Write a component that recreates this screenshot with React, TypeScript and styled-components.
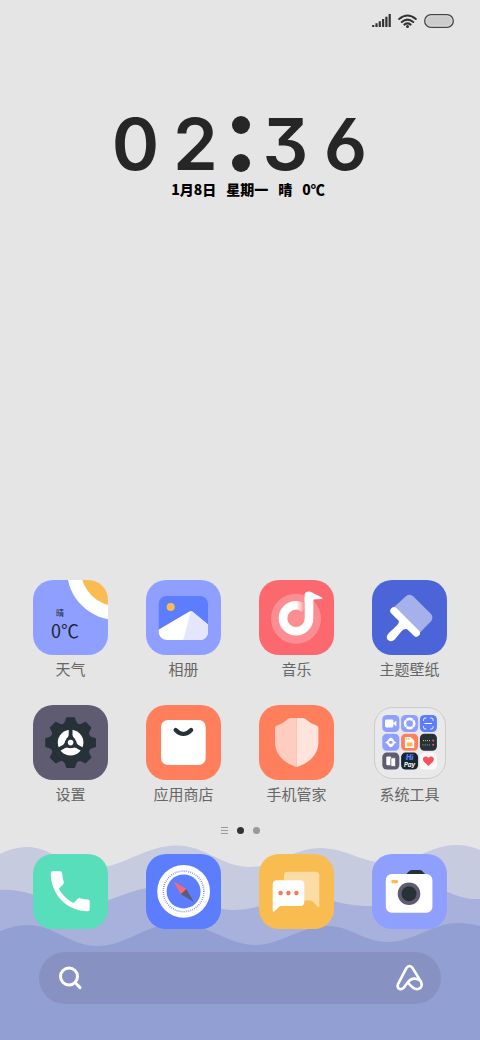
import React from 'react';
import styled, { createGlobalStyle } from 'styled-components';

const INK = '#263238';
const BLUE = '#5d7dff';
const PERIWINKLE = '#8f9fff';
const ORANGE = '#ff7f5c';
const AMBER = '#f8bc50';
const SLATE = '#5f5b70';

const GlobalStyle = createGlobalStyle`
  * { box-sizing: border-box; }
  body {
    margin: 0;
    background: #e5e5e5;
    font-family: 'Noto Sans CJK SC', sans-serif;
  }
  button { font: inherit; color: inherit; border: 0; padding: 0; background: none; cursor: pointer; }
`;

const Screen = styled.div`
  position: relative;
  display: flex;
  flex-direction: column;
  min-height: 100vh;
  padding-bottom: 36px;
  background: #e5e5e5;
`;

const Wallpaper = styled.svg`
  position: absolute;
  left: 0;
  bottom: 0;
  width: 100%;
  height: 200px;
`;

const StatusBar = styled.header`
  display: flex;
  justify-content: flex-end;
  align-items: center;
  gap: 7px;
  height: 41px;
  padding-right: 26px;
`;

const ClockWidget = styled.section`
  display: flex;
  flex-direction: column;
  align-items: center;
  margin-top: 67px;
`;

const Time = styled.time`
  display: flex;
  justify-content: center;
  align-items: center;
  height: 71px;
  padding-left: 1px;
  color: #262626;
  font: 600 72px/70px Inter, sans-serif;
  font-feature-settings: 'cv03', 'cv09';
`;

const Digit = styled.span`
  width: 60px;
  text-align: center;
`;

const Colon = styled.span`
  display: flex;
  flex-direction: column;
  align-items: center;
  gap: 20px;
  width: 30px;
`;

const ColonDot = styled.i`
  width: 18px;
  height: 18px;
  border-radius: 50%;
  background: #262626;
`;

const DateLine = styled.p`
  display: flex;
  gap: 10px;
  margin: 0 0 0 16px;
  color: #000;
  font-size: 14px;
  font-weight: 900;
  line-height: 20px;
`;

const AppGrid = styled.main`
  position: relative;
  display: grid;
  grid-template-columns: repeat(4, 1fr);
  row-gap: 26px;
  margin-top: auto;
  padding: 0 14px;
`;

const Dock = styled.nav`
  position: relative;
  display: grid;
  grid-template-columns: repeat(4, 1fr);
  margin-top: 18px;
  padding: 0 14px;
`;

const AppButton = styled.button`
  display: flex;
  flex-direction: column;
  align-items: center;
  gap: 4px;
`;

const Tile = styled.span<{ $color: string }>`
  position: relative;
  display: block;
  width: 75px;
  height: 75px;
  border-radius: 20px;
  overflow: hidden;
  background: ${(p) => p.$color};
  svg { display: block; }
`;

const Label = styled.span`
  color: #666;
  font-size: 15px;
  font-weight: 400;
  line-height: 20px;
`;

const WeatherReading = styled.span`
  position: absolute;
  left: 18px;
  top: 27px;
  display: flex;
  flex-direction: column;
  color: #1f2533;
  text-align: left;
`;

const Condition = styled.span`
  padding-left: 5px;
  font-size: 8px;
  line-height: 12px;
`;

const Temperature = styled.span`
  font-size: 18px;
  font-weight: 400;
  line-height: 22px;
`;

const Pager = styled.div`
  position: relative;
  display: flex;
  justify-content: center;
  align-items: center;
  gap: 9px;
  height: 12px;
  margin-top: 20px;
`;

const PageDot = styled.i<{ $active?: boolean }>`
  width: 7px;
  height: 7px;
  border-radius: 50%;
  background: ${(p) => (p.$active ? '#333' : '#999')};
`;

const SearchBar = styled.form`
  position: relative;
  display: flex;
  align-items: center;
  height: 52px;
  margin: 23px 39px 0;
  padding: 0 17px 0 19px;
  border-radius: 26px;
  background: #8792c2;
  button { display: flex; }
`;

const SearchInput = styled.input`
  flex: 1;
  min-width: 0;
  height: 40px;
  border: 0;
  outline: 0;
  background: none;
  color: #fff;
  font: 16px 'Noto Sans CJK SC', sans-serif;
`;

const Art = ({ children }: { children?: React.ReactNode }) => (
  <svg width="75" height="75" viewBox="0 0 75 75" aria-hidden="true">{children}</svg>
);

const WeatherIcon = () => (
  <>
    <Art>
      <circle cx="84" cy="-10" r="50" fill="#fff" />
      <circle cx="84" cy="-10" r="36" fill={AMBER} />
    </Art>
    <WeatherReading>
      <Condition>晴</Condition>
      <Temperature>0℃</Temperature>
    </WeatherReading>
  </>
);

const AlbumIcon = () => (
  <Art>
    <clipPath id="photo"><rect x="12.7" y="16" width="49.3" height="44" rx="8" /></clipPath>
    <g clipPath="url(#photo)">
      <rect x="12" y="15" width="51" height="46" fill={BLUE} />
      <path d="M12 50 L43.4 31.6 Q45 30.6 46.5 31.8 L63 45.2 V61 H12Z" fill="#fff" />
      <path d="M45 31 L46.5 31.8 L63 45.2 V61 H37Z" fill="#e3e6fd" />
      <circle cx="24.7" cy="27" r="4" fill={AMBER} />
    </g>
  </Art>
);

const MusicIcon = () => (
  <Art>
    <linearGradient id="tail" x1="37" x2="45" y1="0" y2="0" gradientUnits="userSpaceOnUse">
      <stop offset="0" stopColor="#fff" />
      <stop offset="1" stopColor="#fff" stopOpacity="0.1" />
    </linearGradient>
    <circle cx="37" cy="38.7" r="25" fill="#fff" fillOpacity="0.25" />
    <path d="M50 17 V38.3 A13 13 0 1 1 37 25.3" fill="none" stroke="#fff" strokeWidth="8.6" />
    <path d="M37 25.3 Q41.5 25.3 45.6 28.5" fill="none" stroke="url(#tail)" strokeWidth="8.6" />
    <path d="M45.7 20 V14.6 Q46 11.6 50 11.6 Q51.5 11.6 53 12.6 L63 17.6 Q64.2 18.8 62.5 19 L54.3 19.4 V22 H45.7Z" fill="#fff" />
  </Art>
);

const ThemeIcon = () => (
  <Art>
    <path d="M21.5 27.5 L34 16.2 Q37.7 13.2 41.4 16.4 L59 34 Q61.8 37.7 59 41.3 L47.5 53 Z" fill="#a6b1ec" />
    <path d="M22 30.8 L44.2 53" stroke="#fff" strokeWidth="7.4" strokeLinecap="round" />
    <path d="M25 35 Q28.5 41 26 44.3 L16.2 53.8 C12 59 18 63.5 22.5 59.8 L29.5 51.2 Q33 46.8 41 51.5 Z" fill="#fff" />
  </Art>
);

const SettingsIcon = () => (
  <Art>
    <g transform="translate(37.6 37.6)">
      <g fill={INK} stroke={INK} strokeWidth="2" strokeLinejoin="round">
        {[0, 45, 90, 135, 180, 225, 270, 315].map((angle) => (
          <path key={angle} d="M-7.5 -17.5 Q-5.2 -19 -4.6 -21 L-3.6 -24.4 H3.6 L4.6 -21 Q5.2 -19 7.5 -17.5Z" transform={`rotate(${angle})`} />
        ))}
      </g>
      <circle r="19.2" fill={INK} />
      <circle r="12.8" fill="#fff" />
      {[0, 120, 240].map((angle) => (
        <path key={angle} d="M-1.9 -13.5 H1.9 V-7.5 Q2.2 -5 4.2 -4 L0 1 L-4.2 -4 Q-2.2 -5 -1.9 -7.5Z" fill={INK} transform={`rotate(${angle})`} />
      ))}
      <circle r="5.6" fill={INK} />
      <circle r="2.8" fill="#fff" />
    </g>
  </Art>
);

const StoreIcon = () => (
  <Art>
    <rect x="15" y="15" width="44.7" height="45" rx="7" fill="#fff" />
    <path d="M29.6 25 Q37.4 33 45.2 25" fill="none" stroke={INK} strokeWidth="4.2" strokeLinecap="round" />
  </Art>
);

const GuardIcon = () => (
  <Art>
    <path d="M37.7 13 H32 Q30.3 13 29 14 Q24 18.6 18 20.4 Q16 21 16 23 V37 C16 49 24 57.5 37.7 62Z" fill="#ffcdbf" />
    <path d="M37.7 13 H43.4 Q45.1 13 46.4 14 Q51.4 18.6 57.4 20.4 Q59.4 21 59.4 23 V37 C59.4 49 51.4 57.5 37.7 62Z" fill="#ffe3dc" />
  </Art>
);

const MINI_COLORS = [PERIWINKLE, PERIWINKLE, BLUE, PERIWINKLE, ORANGE, INK, SLATE, '#17252f', '#fafafa'];

const FolderIcon = () => (
  <Art>
    <rect x="2.5" y="2.5" width="71" height="71" rx="18" fill="#e9e9e9" stroke="#cbcbcb" />
    {MINI_COLORS.map((color, i) => (
      <rect key={i} x={10.3 + (i % 3) * 18.8} y={10 + Math.floor(i / 3) * 18.8} width="17" height="17" rx="4.5" fill={color} />
    ))}
    {/* video */}
    <rect x="13" y="14.6" width="8.4" height="7.8" rx="1.4" fill="#fff" />
    <path d="M21 18.5 L24.4 15.4 V21.6Z" fill="#fff" />
    {/* browser */}
    <circle cx="37.6" cy="18.5" r="4.6" fill="none" stroke="#fff" strokeWidth="2.6" />
    <path d="M33 13.900 L34.600 15.500 M42.200 13.900 L40.600 15.500 M33 23.100 L34.600 21.500 M42.200 23.100 L40.600 21.500" stroke={PERIWINKLE} strokeWidth="0.8" />
    {/* scanner */}
    <path d="M51.5 15.8 V14.8 Q51.5 13 53.3 13 H54.3 M58.3 13 H59.3 Q61.1 13 61.1 14.8 V15.8 M61.1 21.2 V22.2 Q61.1 24 59.3 24 H58.3 M54.3 24 H53.3 Q51.5 24 51.5 22.2 V21.2 M52.5 18.5 H60" fill="none" stroke="#fff" strokeWidth="1" />
    {/* cleaner */}
    <path d="M13 37.4 Q15 36.800 16.400 34.400 Q18.800 30.500 21.200 34.400 Q22.600 36.800 24.600 37.400 Q22.600 38 21.200 40.400 Q18.800 44.300 16.400 40.400 Q15 38 13 37.400Z" fill="#fff" />
    <rect x="17" y="36.100" width="3.600" height="2.600" rx="1.200" fill={PERIWINKLE} />
    {/* sim card */}
    <path d="M33.6 32 H38.6 L42.3 35.4 V43 H33.6 Q32.9 43 32.9 42 V33 Q32.9 32 33.6 32Z" fill="#fff" />
    <rect x="34.7" y="37.4" width="5.8" height="4" fill={AMBER} />
    <path d="M34.8 33 V35 M36.8 33 V35" stroke={AMBER} strokeWidth="1" />
    {/* recorder */}
    <path d="M51 35.6 H58" stroke={AMBER} strokeWidth="1" strokeDasharray="1 1" />
    <path d="M50.6 39.8 H58" stroke="#b8b8b8" strokeWidth="1.2" strokeDasharray="0.7 1.4" />
    <circle cx="61.2" cy="35.6" r="1" fill="#f55b5b" />
    <circle cx="61.2" cy="39.8" r="1" fill="#f55b5b" />
    {/* clone phone */}
    <rect x="14.3" y="51.6" width="4.8" height="8.6" rx="1" fill="#fff" />
    <rect x="18.8" y="52.8" width="4.8" height="8.6" rx="1" fill="#fff" stroke={SLATE} strokeWidth="0.8" />
    {/* payments */}
    <text x="37.6" y="55.4" textAnchor="middle" fill="#5d7dff" fontFamily="Inter, sans-serif" fontSize="7" fontWeight="900" fontStyle="italic">Hi</text>
    <text x="37.6" y="62" textAnchor="middle" fill="#fff" fontFamily="Inter, sans-serif" fontSize="6" fontWeight="700" fontStyle="italic">Pay</text>
    {/* health */}
    <path d="M56.4 61 L51.7 56.5 C49 52.4 54 49.8 56.4 53.1 C58.8 49.8 63.8 52.4 61.1 56.5Z" fill="#f8525c" />
  </Art>
);

const PhoneIcon = () => (
  <Art>
    <path d="M19.5 17.3 H27.2 Q29 17.3 29.1 19 Q29.4 24 30.7 28 Q31 29.5 30 30.5 L25.8 34.8 Q31.5 45 40.6 49 L44.8 44.8 Q46 43.8 47.3 44.2 Q51 45.4 55 45.5 Q56.7 45.6 56.7 47.2 V55.5 Q56.7 57.3 54.8 57.3 C34 57 18 41 17.7 19.2 Q17.7 17.3 19.5 17.3Z" fill="#fff" />
  </Art>
);

const CompassIcon = () => (
  <Art>
    <circle cx="37.6" cy="37.4" r="26.4" fill="#fff" />
    <circle cx="37.6" cy="37.4" r="20.3" fill="none" stroke={BLUE} strokeWidth="1.6" strokeDasharray="0.7 1.3" />
    <circle cx="37.6" cy="37.4" r="17" fill={BLUE} />
    <path d="M27.3 27.3 L40.3 35 L35 40.2Z" fill="#fb696f" />
    <path d="M47.9 47.9 L40.3 35 L35 40.2Z" fill={SLATE} />
  </Art>
);

const MessagesIcon = () => (
  <Art>
    <path d="M29 17.7 H56.3 Q60.3 17.7 60.3 21.7 V52.2 Q60.3 54 59 52.8 L53.4 47.2 Q52.6 46.5 51.5 46.5 H29 Q25 46.5 25 42.5 V21.7 Q25 17.7 29 17.7Z" fill="#fbdca4" />
    <path d="M17.7 26.3 H41.3 Q45.3 26.3 45.3 30.3 V48 Q45.3 52 41.3 52 H22 Q20.8 52 20 52.8 L15.5 57.2 Q13.7 58.6 13.7 56.6 V30.3 Q13.7 26.3 17.7 26.3Z" fill="#fff" />
    {[21.6, 29.4, 37.4].map((cx) => <circle key={cx} cx={cx} cy="39" r="2.2" fill="#ff7550" />)}
  </Art>
);

const CameraIcon = () => (
  <Art>
    <path d="M34.4 22 V20.5 Q34.6 19 36 18.6 Q37.2 16 39.6 16 H48 Q50.4 16 51.4 18.6 Q53 19 53 20.5 V22Z" fill={INK} />
    <rect x="13.8" y="20" width="46.6" height="38.8" rx="6" fill="#fff" />
    <rect x="19.4" y="26" width="6.6" height="3.2" rx="1" fill={AMBER} />
    <circle cx="37" cy="39.7" r="11.3" fill={SLATE} />
    <circle cx="37" cy="39.7" r="7.5" fill={INK} />
  </Art>
);

const APPS = [
  { name: '天气', color: PERIWINKLE, Icon: WeatherIcon },
  { name: '相册', color: PERIWINKLE, Icon: AlbumIcon },
  { name: '音乐', color: '#fb696f', Icon: MusicIcon },
  { name: '主题壁纸', color: '#4b65d8', Icon: ThemeIcon },
  { name: '设置', color: SLATE, Icon: SettingsIcon },
  { name: '应用商店', color: ORANGE, Icon: StoreIcon },
  { name: '手机管家', color: ORANGE, Icon: GuardIcon },
  { name: '系统工具', color: 'transparent', Icon: FolderIcon },
];

const DOCK_APPS = [
  { name: '电话', color: '#59debb', Icon: PhoneIcon },
  { name: '浏览器', color: BLUE, Icon: CompassIcon },
  { name: '短信', color: AMBER, Icon: MessagesIcon },
  { name: '相机', color: PERIWINKLE, Icon: CameraIcon },
];

export default function App() {
  return (
    <>
      <GlobalStyle />
      <Screen>
        <Wallpaper viewBox="0 0 480 200" preserveAspectRatio="none" aria-hidden="true">
          <path fill="#c7cbdf" d="M0 14 C10 9 18 7 28 7 C50 7 68 28 94 28 C122 28 145 5.500 177 5.500 C205 5.500 222 27 250 27 C274 27 294 8 320 8 C346 8 362 23 388 23 C414 23 430 5 456 5 C466 5 473 7 480 10 V200 H0Z" />
          <path fill="#a7b1db" d="M0 50 C32 48 50 66 80 66 C108 66 128 47 160 47 C190 47 205 70 232 70 C262 70 274 57 302 57 C328 57 342 66 368 66 C392 66 406 46 430 48 C450 50 458 60 480 59 V200 H0Z" />
          <path fill="#929fd3" d="M0 91 C10 87 18 85 28 85 C54 85 70 106 97 106 C126 106 148 83 178 83 C206 83 228 105 255 105 C281 105 300 86 328 86 C350 86 364 102 388 102 C414 102 432 83 458 83 C466 83 473 84 480 86 V200 H0Z" />
        </Wallpaper>

        <StatusBar>
          <svg width="19" height="13" viewBox="0 0 19 13" aria-label="信号">
            <path d="M1.200 13 V11 M4.500 13 V9.300 M7.800 13 V7.300 M11.100 13 V5 M14.400 13 V2.800 M17.700 13 V0" stroke="#333" strokeWidth="2.200" />
          </svg>
          <svg width="19" height="14" viewBox="0 0 19 14" aria-label="无线网络">
            <path d="M1.200 5 Q9.500 -2 17.800 5 M3.800 8 Q9.500 3.200 15.200 8 M6.400 10.600 Q9.500 8.200 12.600 10.600" fill="none" stroke="#333" strokeWidth="2" strokeLinecap="round" />
            <circle cx="9.500" cy="12.400" r="1.500" fill="#333" />
          </svg>
          <svg width="30" height="14" viewBox="0 0 30 14" aria-label="电池">
            <rect x="0.700" y="0.700" width="28.600" height="12.600" rx="6.300" fill="#e5e5e5" stroke="#444" strokeWidth="1.300" />
            <rect x="2.200" y="2.200" width="25.600" height="9.600" rx="4.800" fill="#ccc" />
          </svg>
        </StatusBar>

        <ClockWidget>
          <Time dateTime="02:36" aria-label="02:36">
            <Digit>0</Digit>
            <Digit>2</Digit>
            <Colon><ColonDot /><ColonDot /></Colon>
            <Digit>3</Digit>
            <Digit>6</Digit>
          </Time>
          <DateLine>
            <span>1月8日</span>
            <span>星期一</span>
            <span>晴</span>
            <span>0℃</span>
          </DateLine>
        </ClockWidget>

        <AppGrid>
          {APPS.map(({ name, color, Icon }) => (
            <AppButton key={name} type="button">
              <Tile $color={color}><Icon /></Tile>
              <Label>{name}</Label>
            </AppButton>
          ))}
        </AppGrid>

        <Pager>
          <svg width="7" height="7" viewBox="0 0 7 7" aria-hidden="true">
            <path d="M0 0.500 H7 M0 3.500 H7 M0 6.500 H7" stroke="#999" />
          </svg>
          <PageDot $active />
          <PageDot />
        </Pager>

        <Dock>
          {DOCK_APPS.map(({ name, color, Icon }) => (
            <AppButton key={name} type="button" aria-label={name}>
              <Tile $color={color}><Icon /></Tile>
            </AppButton>
          ))}
        </Dock>

        <SearchBar role="search" onSubmit={(e) => e.preventDefault()}>
          <button type="submit" aria-label="搜索">
            <svg width="25" height="25" viewBox="0 0 25 25" fill="none" stroke="#fff" strokeWidth="3" strokeLinecap="round">
              <circle cx="11" cy="10.500" r="8.500" />
              <path d="M17.300 16.700 L22 21.600" />
            </svg>
          </button>
          <SearchInput type="search" aria-label="搜索" />
          <button type="button" aria-label="语音助手">
            <svg width="29" height="28" viewBox="0 0 29 28" fill="none" stroke="#fff" strokeWidth="2.600" strokeLinecap="round" strokeLinejoin="round">
              <path d="M26 17.200 C21 13.200 16 14 12.800 18.300 L8.800 23.600 Q7 25.600 4.600 25 Q1.800 23.800 2.900 20.400 L11.200 4.300 Q14.500 -0.200 17.800 4.300 L26.200 18.200 Q28.200 24 22.300 25.200 Q17.800 25.200 12.800 18.300" />
            </svg>
          </button>
        </SearchBar>
      </Screen>
    </>
  );
}
